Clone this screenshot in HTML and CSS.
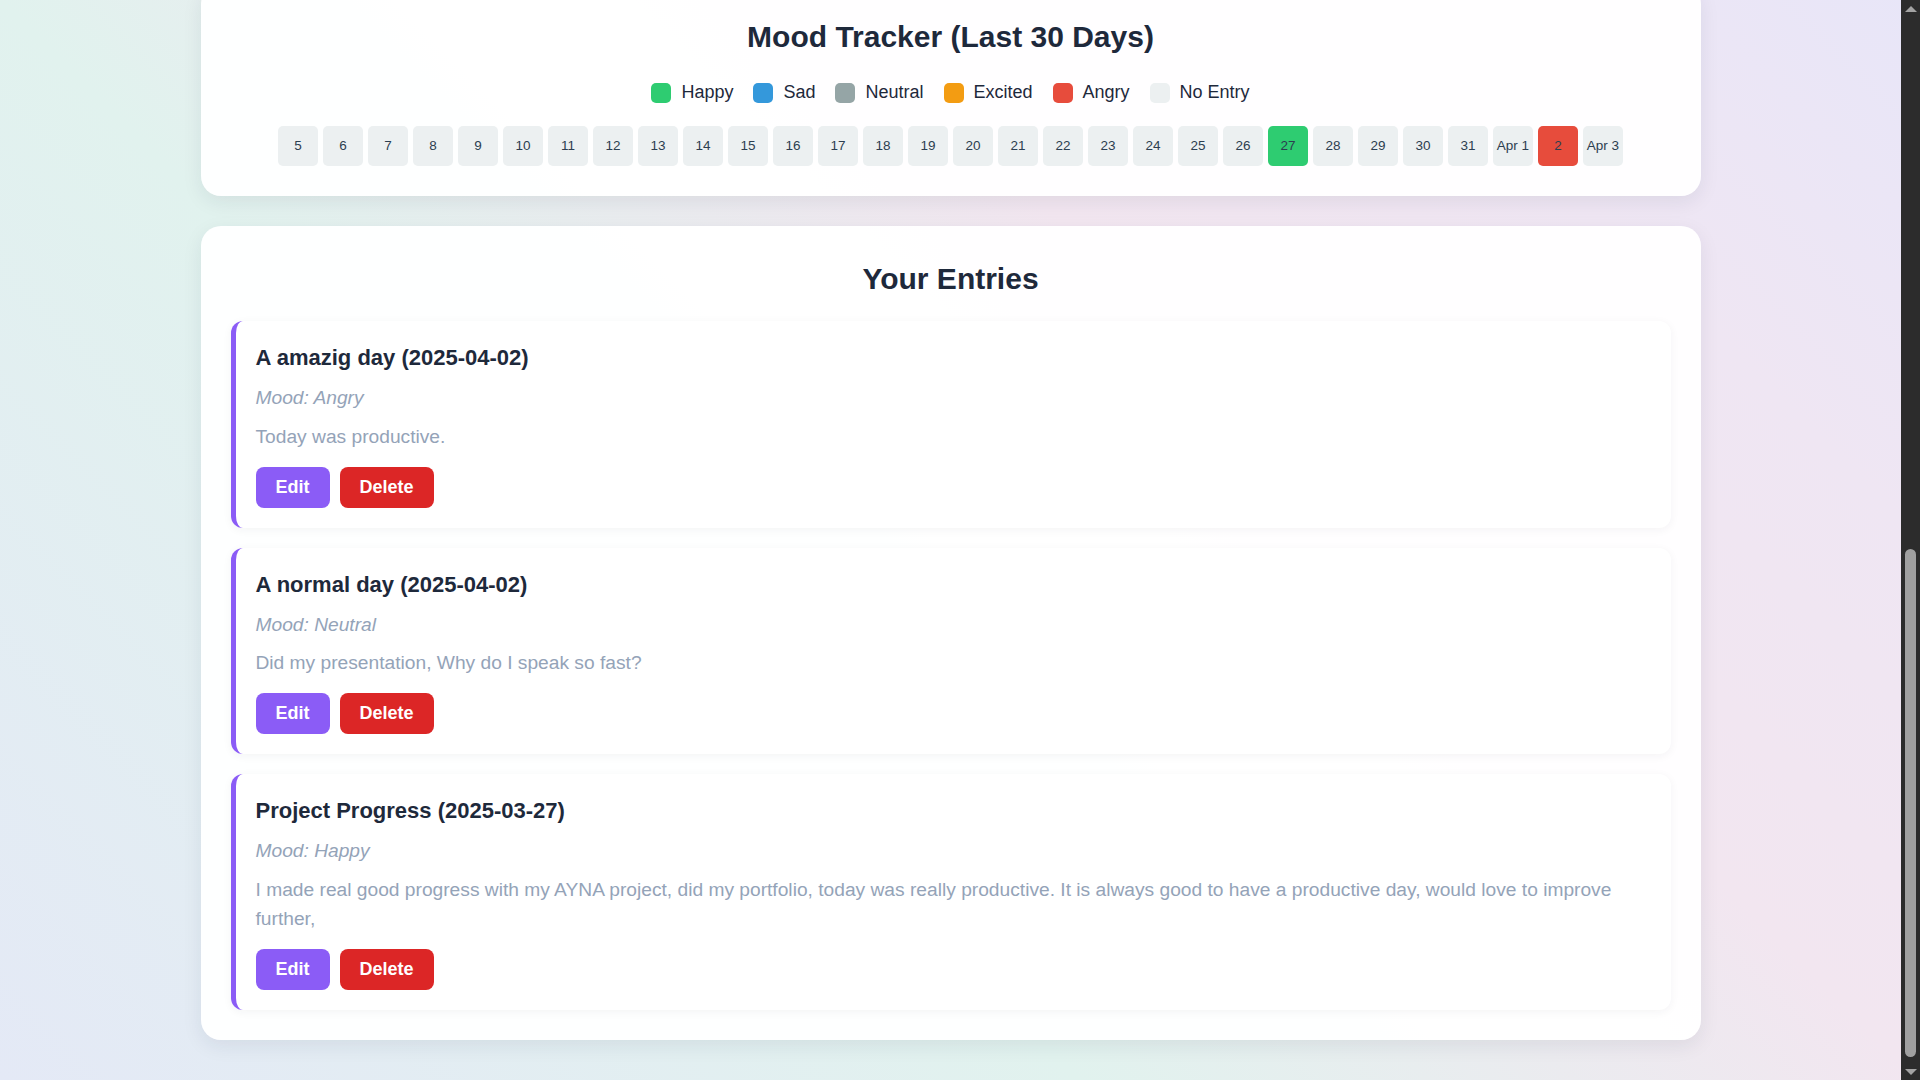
FILE: index.html
```html
<!DOCTYPE html>
<html lang="en">
<head>
<meta charset="UTF-8">
<meta name="viewport" content="width=device-width, initial-scale=1">
<title>Mood Journal</title>
<link rel="stylesheet" href="styles.css">
</head>
<body>
<div class="container">
  <section class="card tracker-card">
    <h2 class="card-title">Mood Tracker (Last 30 Days)</h2>
    <div class="legend">
      <span class="legend-item"><span class="swatch happy"></span>Happy</span>
      <span class="legend-item"><span class="swatch sad"></span>Sad</span>
      <span class="legend-item"><span class="swatch neutral"></span>Neutral</span>
      <span class="legend-item"><span class="swatch excited"></span>Excited</span>
      <span class="legend-item"><span class="swatch angry"></span>Angry</span>
      <span class="legend-item"><span class="swatch none"></span>No Entry</span>
    </div>
    <div class="days">
      <div class="day">5</div>
      <div class="day">6</div>
      <div class="day">7</div>
      <div class="day">8</div>
      <div class="day">9</div>
      <div class="day">10</div>
      <div class="day">11</div>
      <div class="day">12</div>
      <div class="day">13</div>
      <div class="day">14</div>
      <div class="day">15</div>
      <div class="day">16</div>
      <div class="day">17</div>
      <div class="day">18</div>
      <div class="day">19</div>
      <div class="day">20</div>
      <div class="day">21</div>
      <div class="day">22</div>
      <div class="day">23</div>
      <div class="day">24</div>
      <div class="day">25</div>
      <div class="day">26</div>
      <div class="day happy">27</div>
      <div class="day">28</div>
      <div class="day">29</div>
      <div class="day">30</div>
      <div class="day">31</div>
      <div class="day">Apr 1</div>
      <div class="day angry">2</div>
      <div class="day">Apr 3</div>
    </div>
  </section>

  <section class="card entries-card">
    <h2 class="card-title">Your Entries</h2>

    <article class="entry">
      <h3 class="entry-title">A amazig day (2025-04-02)</h3>
      <p class="entry-mood">Mood: Angry</p>
      <p class="entry-text">Today was productive.</p>
      <div class="entry-actions">
        <button type="button" class="btn btn-edit">Edit</button>
        <button type="button" class="btn btn-delete">Delete</button>
      </div>
    </article>

    <article class="entry">
      <h3 class="entry-title">A normal day (2025-04-02)</h3>
      <p class="entry-mood">Mood: Neutral</p>
      <p class="entry-text">Did my presentation, Why do I speak so fast?</p>
      <div class="entry-actions">
        <button type="button" class="btn btn-edit">Edit</button>
        <button type="button" class="btn btn-delete">Delete</button>
      </div>
    </article>

    <article class="entry">
      <h3 class="entry-title">Project Progress (2025-03-27)</h3>
      <p class="entry-mood">Mood: Happy</p>
      <p class="entry-text">I made real good progress with my AYNA project, did my portfolio, today was really productive. It is always good to have a productive day, would love to improve further,</p>
      <div class="entry-actions">
        <button type="button" class="btn btn-edit">Edit</button>
        <button type="button" class="btn btn-delete">Delete</button>
      </div>
    </article>
  </section>
</div>

<div class="scrollbar" aria-hidden="true">
  <span class="sb-arrow sb-up"></span>
  <span class="sb-track"><span class="sb-thumb"></span></span>
  <span class="sb-arrow sb-down"></span>
</div>
<script src="script.js"></script>
</body>
</html>
```

FILE: styles.css
```css
* {
  box-sizing: border-box;
}

html {
  scroll-behavior: auto;
}

body {
  margin: 0;
  padding-right: 19px;
  font-family: "Liberation Sans", Arial, sans-serif;
  font-size: 18px;
  line-height: 1.5;
  color: #1e293b;
  background: linear-gradient(45deg, #e4e9f6 0%, #e1f2ee 36%, #f2e6f0 64%, #efe6f3 82%, #e8e6f8 100%);
  background-attachment: fixed;
  min-height: 100vh;
}

.container {
  max-width: 1500px;
  margin: 0 auto;
  padding: 40px 0;
}

.card {
  background: rgba(255, 255, 255, 0.96);
  border-radius: 20px;
  padding: 30px;
  margin-bottom: 30px;
  box-shadow: 0 6px 20px rgba(30, 41, 59, 0.08);
}

.card:last-child {
  margin-bottom: 0;
}

.card-title {
  margin: 0 0 20px;
  text-align: center;
  font-size: 30px;
  font-weight: 700;
  color: #1e293b;
}

/* tracker */
.legend {
  display: flex;
  justify-content: center;
  align-items: center;
  gap: 20px;
  margin-bottom: 20px;
  color: #1e293b;
}

.legend-item {
  display: flex;
  align-items: center;
  gap: 10px;
}

.swatch {
  width: 20px;
  height: 20px;
  border-radius: 5px;
  display: inline-block;
}

.happy { background: #2ecc71; }
.sad { background: #3498db; }
.neutral { background: #95a5a6; }
.excited { background: #f39c12; }
.angry { background: #e74c3c; }
.none { background: #ecf0f1; }

.days {
  display: flex;
  justify-content: center;
  gap: 5px;
}

.day {
  width: 40px;
  height: 40px;
  border-radius: 5px;
  background: #ecf0f1;
  color: #2c3e50;
  font-size: 13.5px;
  line-height: 1;
  display: flex;
  align-items: center;
  justify-content: center;
  white-space: nowrap;
}

.day.happy { background: #2ecc71; }
.day.angry { background: #e74c3c; }

/* entries */
.entry {
  background: #fff;
  border-left: 5px solid #8b5cf6;
  border-radius: 12px;
  padding: 20px;
  margin-bottom: 20px;
  box-shadow: 0 2px 10px rgba(30, 41, 59, 0.05);
}

.entry:last-child {
  margin-bottom: 0;
}

.entry-title {
  margin: 0 0 10px;
  font-size: 22px;
  font-weight: 700;
  color: #1e293b;
}

.entry-mood {
  margin: 0 0 10px;
  font-size: 19.2px;
  font-style: italic;
  color: #94a3b8;
}

.entry-text {
  margin: 0 0 15px;
  font-size: 19.2px;
  color: #94a3b8;
}

.entry-actions {
  display: flex;
  gap: 10px;
}

.btn {
  font-family: inherit;
  font-size: 18px;
  font-weight: 700;
  line-height: normal;
  padding: 10px 20px;
  border: none;
  border-radius: 8px;
  color: #fff;
  cursor: pointer;
}

.btn-edit { background: #8b5cf6; }
.btn-delete { background: #dc2626; }

/* window scrollbar (drawn, since the page is shown scrolled to its end) */
.scrollbar {
  position: fixed;
  top: 0;
  right: 0;
  width: 19px;
  height: 100vh;
  background: #2c2c2c;
  display: flex;
  flex-direction: column;
}

.sb-arrow {
  height: 17px;
  flex: none;
  display: flex;
  align-items: center;
  justify-content: center;
}

.sb-arrow::before {
  content: "";
  width: 0;
  height: 0;
  border-left: 6px solid transparent;
  border-right: 6px solid transparent;
}

.sb-up::before {
  border-bottom: 6px solid #a3a3a3;
}

.sb-down::before {
  border-top: 6px solid #a3a3a3;
}

.sb-track {
  flex: 1;
  display: flex;
  flex-direction: column;
  justify-content: flex-end;
  padding: 0 4px 6px;
}

.sb-thumb {
  height: 508px;
  background: #a0a0a0;
  border-radius: 6px;
}
```

FILE: script.js
```js
function scrollToBottom() {
  window.scrollTo(0, document.documentElement.scrollHeight);
}
scrollToBottom();
window.addEventListener('load', scrollToBottom);
```
